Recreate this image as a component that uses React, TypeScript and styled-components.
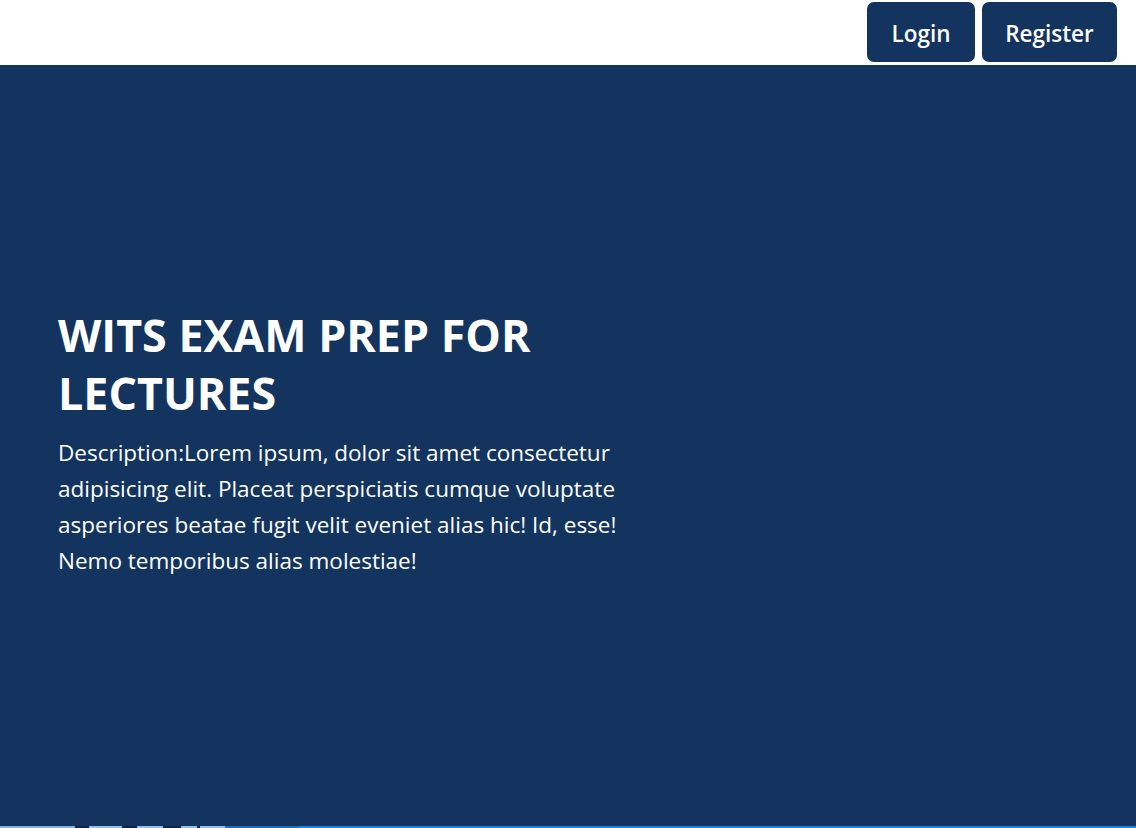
import React from "react";
import styled, { createGlobalStyle } from "styled-components";

const Global = createGlobalStyle`
  html, body { margin: 0; padding: 0; background: #ffffff; }
  body { font-family: "Open Sans", "Noto Sans", sans-serif; }
  * { box-sizing: border-box; }
`;

const Page = styled.div`
  display: flex;
  flex-direction: column;
  height: 828px;
  overflow: hidden;
`;

const Header = styled.header`
  height: 65px;
  display: flex;
  justify-content: flex-end;
  align-items: flex-start;
  gap: 7px;
  padding: 2px 19px 0 0;
  background: #ffffff;
`;

const NavButton = styled.button<{ $w: number }>`
  width: ${(p) => p.$w}px;
  height: 60px;
  padding: 2px 0 0;
  border: none;
  border-radius: 7px;
  background: #13345e;
  color: #ffffff;
  font-family: "Open Sans", sans-serif;
  font-weight: 600;
  font-size: 22.5px;
  cursor: pointer;
`;

const Hero = styled.section`
  flex: 1;
  background: #13345e;
  display: flex;
  align-items: center;
  padding: 0 0 6px 58px;
`;

const Content = styled.div`
  width: 590px;
  color: #ffffff;
`;

const Title = styled.h1`
  margin: 0 0 13px;
  font-size: 44.8px;
  line-height: 58px;
  font-weight: 700;
`;

const Desc = styled.p`
  margin: 0;
  font-size: 22.5px;
  line-height: 36px;
`;

const Strip = styled.div`
  height: 2px;
  display: flex;
  background: #1b86e0;
`;

const Seg = styled.div<{ $w: number; $c: string }>`
  width: ${(p) => p.$w}px;
  background: ${(p) => p.$c};
`;

const segs: [number, string][] = [
  [75, "#7fb3e0"],
  [14, "#10253f"],
  [33, "#8fc0ea"],
  [15, "#10253f"],
  [26, "#8fc0ea"],
  [18, "#10253f"],
  [16, "#8fc0ea"],
  [3, "#10253f"],
  [25, "#8fc0ea"],
  [73, "#1e6fb8"],
];

export default function App() {
  return (
    <>
      <Global />
      <Page>
        <Header>
          <NavButton $w={108}>Login</NavButton>
          <NavButton $w={135}>Register</NavButton>
        </Header>
        <Hero>
          <Content>
            <Title>WITS EXAM PREP FOR LECTURES</Title>
            <Desc>
              Description:Lorem ipsum, dolor sit amet consectetur adipisicing elit. Placeat perspiciatis cumque
              voluptate asperiores beatae fugit velit eveniet alias hic! Id, esse! Nemo temporibus alias molestiae!
            </Desc>
          </Content>
        </Hero>
        <Strip>
          {segs.map(([w, c], i) => (
            <Seg key={i} $w={w} $c={c} />
          ))}
        </Strip>
      </Page>
    </>
  );
}
